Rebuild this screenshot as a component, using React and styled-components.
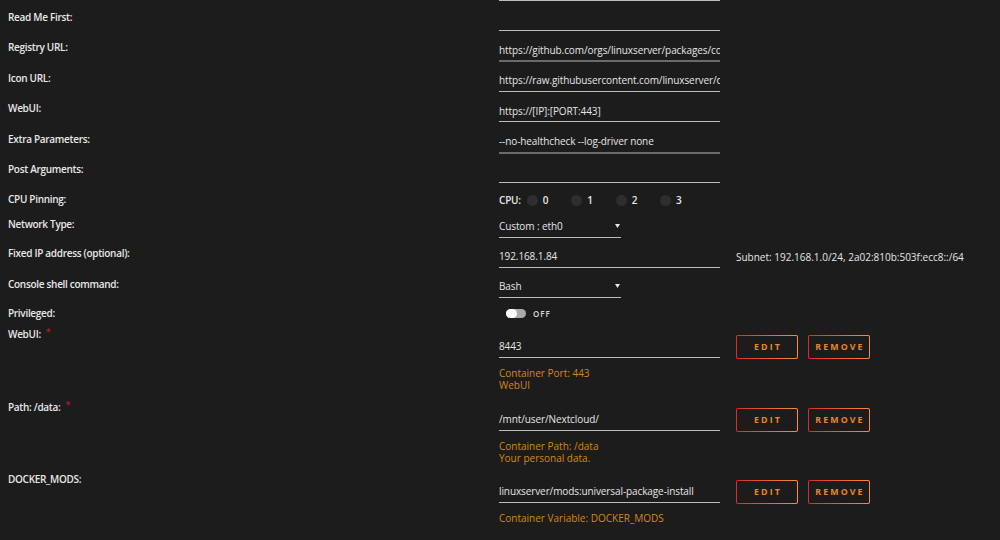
import React from "react";
import styled, { createGlobalStyle } from "styled-components";

const GlobalStyle = createGlobalStyle`
  body {
    margin: 0;
    background: #1c1c1c;
    font-family: "Open Sans", "Liberation Sans", sans-serif;
  }
`;

const Page = styled.div`
  width: 1000px;
  height: 540px;
  overflow: hidden;
  box-sizing: border-box;
  padding-left: 8px;
  background: #1c1c1c;
  color: #e6e6e6;
`;

const TopLine = styled.div`
  margin-left: 491px;
  width: 221px;
  border-top: 1px solid #bdbdbd;
`;

const Row = styled.div`
  display: grid;
  grid-template-columns: 491px 1fr;
  height: ${(p) => p.$h}px;
`;

const Label = styled.div`
  padding-top: 10px;
  font-size: 10px;
  line-height: 12px;
  font-weight: 600;
  letter-spacing: -0.3px;
  color: #e8e8e8;
  white-space: nowrap;
`;

const Required = styled.span`
  color: #c0171c;
  margin-left: 5px;
  font-size: 9px;
  position: relative;
  top: -3px;
`;

const Value = styled.div`
  display: flex;
  align-items: flex-start;
  padding-top: ${(p) => (p.$pt !== undefined ? p.$pt : 13)}px;
`;

const Field = styled.div`
  width: ${(p) => p.$w || 221}px;
  box-sizing: border-box;
  display: flex;
  justify-content: space-between;
  align-items: center;
  font-size: 10px;
  line-height: 12px;
  letter-spacing: -0.1px;
  height: ${(p) => (p.$thick ? 18 : 17)}px;
  padding-bottom: 5px;
  border-bottom: ${(p) => (p.$thick ? "2px solid #6a6a6a" : "1px solid #bdbdbd")};
  color: #e6e6e6;
  white-space: nowrap;
  overflow: hidden;
`;

const Caret = styled.svg`
  width: 5px;
  height: 4px;
  margin-right: 1px;
  flex-shrink: 0;
`;

const Note = styled.div`
  margin-left: 16px;
  font-size: 10px;
  line-height: 12px;
  color: #e6e6e6;
  white-space: nowrap;
`;

const CpuList = styled.div`
  display: flex;
  align-items: center;
  font-size: 10px;
  line-height: 12px;
  font-weight: 600;
  letter-spacing: -0.2px;
`;

const CpuItem = styled.label`
  display: flex;
  align-items: center;
  width: 44.4px;
  &:first-of-type {
    margin-left: 6px;
  }
`;

const CpuDot = styled.span`
  width: 11px;
  height: 11px;
  border-radius: 50%;
  background: #2e2e2e;
  margin-right: 5px;
`;

const Toggle = styled.div`
  display: flex;
  align-items: center;
  margin-left: 7px;
  gap: 7px;
`;

const Track = styled.span`
  width: 20px;
  height: 9px;
  border-radius: 5px;
  background: #a9a9a9;
  display: flex;
`;

const Knob = styled.span`
  width: 11px;
  height: 9px;
  border-radius: 5px;
  background: #ffffff;
`;

const ToggleText = styled.span`
  font-size: 8px;
  letter-spacing: 1px;
  font-weight: 600;
  color: #d8d8d8;
`;

const Mapping = styled.div`
  display: flex;
  align-items: flex-start;
`;

const FieldCol = styled.div`
  width: 221px;
  padding-top: 23px;
`;

const Desc = styled.div`
  margin-top: 9px;
  font-size: 10px;
  line-height: 12px;
  color: #d4880f;
`;

const Button = styled.button`
  margin-top: 17px;
  margin-left: ${(p) => p.$ml}px;
  width: 62px;
  height: 24px;
  box-sizing: border-box;
  padding: 0 0 0 2px;
  border: 1.6px solid transparent;
  border-radius: 2px;
  background: linear-gradient(#1c1c1c, #1c1c1c) padding-box,
    linear-gradient(90deg, #e22828, #ff8c2f) border-box;
  color: #e8862a;
  font-family: "Open Sans", "Liberation Sans", sans-serif;
  font-size: 8.8px;
  font-weight: 700;
  letter-spacing: 2.1px;
  text-transform: uppercase;
`;

function Select({ value }) {
  return (
    <Field $w={122}>
      {value}
      <Caret viewBox="0 0 5 4">
        <path d="M0 0 H5 L2.5 4 Z" fill="#e6e6e6" />
      </Caret>
    </Field>
  );
}

function MappingRow({ label, value, h, required, lines }) {
  return (
    <Row $h={h}>
      <Label>
        {label}
        {required && <Required>*</Required>}
      </Label>
      <Mapping>
        <FieldCol>
          <Field>{value}</Field>
          <Desc>
            {lines.map((l) => (
              <div key={l}>{l}</div>
            ))}
          </Desc>
        </FieldCol>
        <Button $ml={16}>Edit</Button>
        <Button $ml={10}>Remove</Button>
      </Mapping>
    </Row>
  );
}

const textRows = [
  { label: "Read Me First:", value: "" },
  { label: "Registry URL:", value: "https://github.com/orgs/linuxserver/packages/container/package/nextcloud", thick: true },
  { label: "Icon URL:", value: "https://raw.githubusercontent.com/linuxserver/docker-templates/master/linuxserver.io/img/nextcloud-logo.png" },
  { label: "WebUI:", value: "https://[IP]:[PORT:443]" },
  { label: "Extra Parameters:", value: "--no-healthcheck --log-driver none", thick: true },
  { label: "Post Arguments:", value: "" },
];

export default function App() {
  return (
    <Page>
      <GlobalStyle />
      <TopLine />
      {textRows.map((r) => (
        <Row $h={30.4} key={r.label}>
          <Label>{r.label}</Label>
          <Value>
            <Field $thick={r.thick}>{r.value}</Field>
          </Value>
        </Row>
      ))}
      <Row $h={24.6}>
        <Label>CPU Pinning:</Label>
        <Value $pt={11}>
          <CpuList>
            CPU:
            {[0, 1, 2, 3].map((n) => (
              <CpuItem key={n}>
                <CpuDot />
                {n}
              </CpuItem>
            ))}
          </CpuList>
        </Value>
      </Row>
      <Row $h={29}>
        <Label>Network Type:</Label>
        <Value>
          <Select value="Custom : eth0" />
        </Value>
      </Row>
      <Row $h={31}>
        <Label>Fixed IP address (optional):</Label>
        <Value $pt={14}>
          <Field>192.168.1.84</Field>
          <Note>Subnet: 192.168.1.0/24, 2a02:810b:503f:ecc8::/64</Note>
        </Value>
      </Row>
      <Row $h={29}>
        <Label>Console shell command:</Label>
        <Value>
          <Select value="Bash" />
        </Value>
      </Row>
      <Row $h={21}>
        <Label>Privileged:</Label>
        <Value $pt={11}>
          <Toggle>
            <Track>
              <Knob />
            </Track>
            <ToggleText>OFF</ToggleText>
          </Toggle>
        </Value>
      </Row>
      <MappingRow
        h={73}
        label="WebUI:"
        required
        value="8443"
        lines={["Container Port: 443", "WebUI"]}
      />
      <MappingRow
        h={72}
        label="Path: /data:"
        required
        value="/mnt/user/Nextcloud/"
        lines={["Container Path: /data", "Your personal data."]}
      />
      <MappingRow
        h={77}
        label="DOCKER_MODS:"
        value="linuxserver/mods:universal-package-install"
        lines={["Container Variable: DOCKER_MODS"]}
      />
    </Page>
  );
}
